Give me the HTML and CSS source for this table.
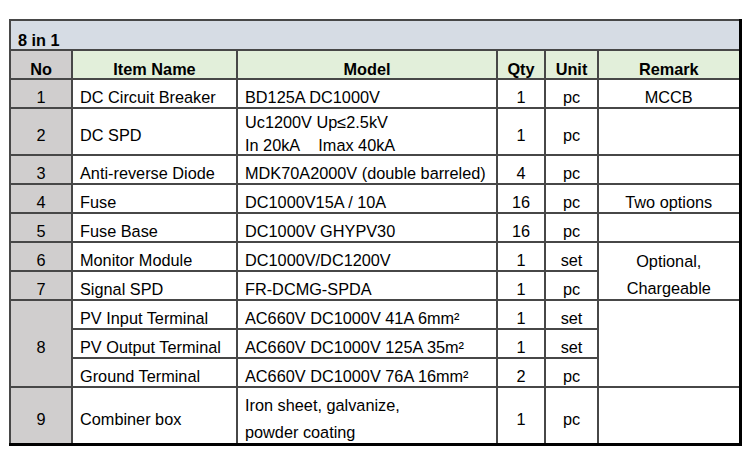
FILE: index.html
```html
<!DOCTYPE html>
<html>
<head>
<meta charset="utf-8">
<link rel="stylesheet" href="styles.css">
</head>
<body>
<div class="page">
<table class="bom">
  <colgroup>
    <col class="c-no"><col class="c-item"><col class="c-model"><col class="c-qty"><col class="c-unit"><col class="c-remark">
  </colgroup>
  <tr class="r-title"><td class="title" colspan="6">8 in 1</td></tr>
  <tr class="r-head">
    <th class="h-no">No</th><th>Item Name</th><th>Model</th><th>Qty</th><th>Unit</th><th>Remark</th>
  </tr>
  <tr class="r">
    <td class="no">1</td><td class="txt">DC Circuit Breaker</td><td class="txt">BD125A DC1000V</td><td class="ctr">1</td><td class="ctr">pc</td><td class="ctr">MCCB</td>
  </tr>
  <tr class="r2">
    <td class="no">2</td><td class="txt">DC SPD</td><td class="txt tight"><div class="two-a">Uc1200V Up≤2.5kV<br>In 20kA&nbsp;&nbsp;&nbsp; Imax 40kA</div></td><td class="ctr">1</td><td class="ctr">pc</td><td class="ctr"></td>
  </tr>
  <tr class="r">
    <td class="no">3</td><td class="txt">Anti-reverse Diode</td><td class="txt">MDK70A2000V (double barreled)</td><td class="ctr">4</td><td class="ctr">pc</td><td class="ctr"></td>
  </tr>
  <tr class="r">
    <td class="no">4</td><td class="txt">Fuse</td><td class="txt">DC1000V15A / 10A</td><td class="ctr">16</td><td class="ctr">pc</td><td class="ctr">Two options</td>
  </tr>
  <tr class="r">
    <td class="no">5</td><td class="txt">Fuse Base</td><td class="txt">DC1000V GHYPV30</td><td class="ctr">16</td><td class="ctr">pc</td><td class="ctr"></td>
  </tr>
  <tr class="r">
    <td class="no">6</td><td class="txt">Monitor Module</td><td class="txt">DC1000V/DC1200V</td><td class="ctr">1</td><td class="ctr">set</td><td class="ctr tight" rowspan="2"><div class="two-b">Optional,<br>Chargeable</div></td>
  </tr>
  <tr class="r">
    <td class="no">7</td><td class="txt">Signal SPD</td><td class="txt">FR-DCMG-SPDA</td><td class="ctr">1</td><td class="ctr">pc</td>
  </tr>
  <tr class="r">
    <td class="no" rowspan="3">8</td><td class="txt">PV Input Terminal</td><td class="txt">AC660V DC1000V 41A 6mm²</td><td class="ctr">1</td><td class="ctr">set</td><td class="ctr" rowspan="3"></td>
  </tr>
  <tr class="r">
    <td class="txt">PV Output Terminal</td><td class="txt">AC660V DC1000V 125A 35m²</td><td class="ctr">1</td><td class="ctr">set</td>
  </tr>
  <tr class="r">
    <td class="txt">Ground Terminal</td><td class="txt">AC660V DC1000V 76A 16mm²</td><td class="ctr">2</td><td class="ctr">pc</td>
  </tr>
  <tr class="r9">
    <td class="no">9</td><td class="txt">Combiner box</td><td class="txt tight"><div class="two-b">Iron sheet, galvanize,<br>powder coating</div></td><td class="ctr">1</td><td class="ctr">pc</td><td class="ctr"></td>
  </tr>
</table>
</div>
</body>
</html>
```

FILE: styles.css
```css
html, body {
  margin: 0;
  padding: 0;
  background: #ffffff;
}

.page {
  padding: 19px 0 0 9px;
}

.bom {
  border-collapse: collapse;
  table-layout: fixed;
  width: 730px;
  font-family: "Liberation Sans", Arial, sans-serif;
  font-size: 16.3px;
  line-height: 18px;
  color: #000;
  border-top: 2px solid #000;
  border-left: 2px solid #000;
  border-right: 3px solid #000;
  border-bottom: 3px solid #000;
}

.c-no { width: 62px; }
.c-item { width: 165px; }
.c-model { width: 260px; }
.c-qty { width: 48px; }
.c-unit { width: 53px; }
.c-remark { width: 142px; }

.bom td, .bom th {
  border: 2px solid #474747;
  padding: 7px 7px 0;
  vertical-align: middle;
  white-space: nowrap;
  overflow: visible;
}

.r-title { height: 30px; }
.r-head { height: 29px; }
.r { height: 29px; }
.r2 { height: 47px; }
.r9 { height: 57px; }

.title {
  background: #d6dce4;
  font-weight: bold;
  text-align: left;
  padding: 10px 7px 0 !important;
}

.r-head th {
  background: #e2efda;
  font-weight: bold;
  text-align: center;
  padding: 8px 4px 0;
}

.r-head th.h-no {
  background: #d0cece;
}

.no {
  background: #d0cece;
  text-align: center;
}

.txt { text-align: left; }
.ctr { text-align: center; }

.bom td.tight {
  padding-top: 1px;
  padding-bottom: 0;
}

.two-a {
  line-height: 23px;
  height: 42px;
}

.two-b {
  line-height: 27px;
  height: 50px;
  padding-top: 3px;
}
```
